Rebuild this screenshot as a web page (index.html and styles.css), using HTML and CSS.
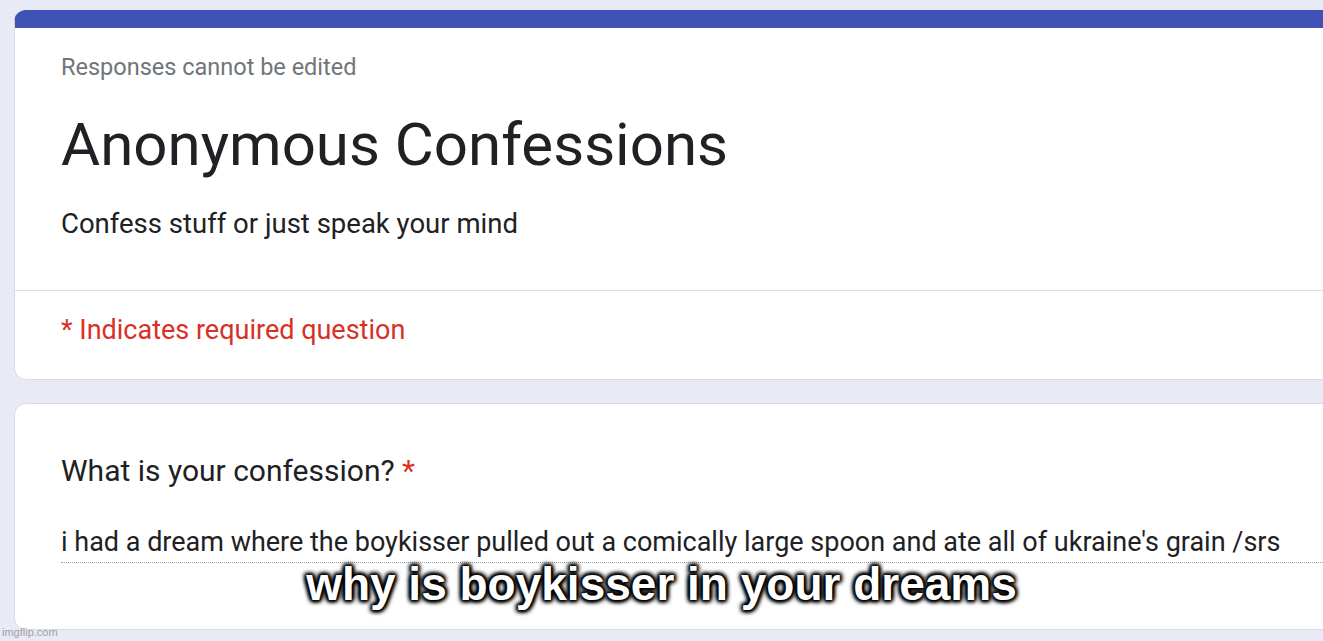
FILE: index.html
```html
<!DOCTYPE html>
<html lang="en">
<head>
    <meta charset="UTF-8">
    <title>Anonymous Confessions</title>
    <link rel="stylesheet" href="styles.css">
</head>
<body>
    <div class="page">
        <div class="card header-card">
            <div class="header-main">
                <p class="note">Responses cannot be edited</p>
                <h1 class="title">Anonymous Confessions</h1>
                <p class="desc">Confess stuff or just speak your mind</p>
            </div>
            <div class="header-foot">
                <p class="required">* Indicates required question</p>
            </div>
        </div>

        <div class="card question-card">
            <p class="question">What is your confession? <span class="star">*</span></p>
            <div class="answer">i had a dream where the boykisser pulled out a comically large spoon and ate all of ukraine's grain /srs</div>
        </div>
    </div>

    <!-- meme caption on top -->
    <div class="caption">why is boykisser in your dreams</div>
    <div class="watermark">imgflip.com</div>
</body>
</html>
```

FILE: styles.css
```css
html, body {
    margin: 0;
    height: 100%;
    overflow: hidden;
}
body {
    background-color: #e8eaf6;
    font-family: Roboto, "Noto Sans", sans-serif;
    color: #202124;
    position: relative;
}
.page {
    padding: 10px 0 0 14px;
    width: 1360px;
}
.card {
    background-color: #fff;
    border: 1px solid #dadce0;
    border-radius: 12px;
}
.header-card {
    border-top: 18px solid #3f51b5;
    height: 351px;
}
.header-main {
    padding: 25px 46px 0;
    height: 237px;
    border-bottom: 1px solid #dadce0;
}
.note {
    margin: 0;
    font-size: 23.5px;
    color: #70757a;
}
.title {
    margin: 28px 0 0;
    font-size: 60px;
    font-weight: 400;
    line-height: 72px;
}
.desc {
    margin: 26px 0 0;
    font-size: 27.5px;
}
.header-foot {
    padding: 23px 46px;
}
.required {
    margin: 0;
    font-size: 27px;
    color: #d93025;
}
.question-card {
    margin-top: 23px;
    height: 225px;
    padding: 0 0 0 46px;
}
.question {
    margin: 49px 0 0;
    font-size: 30px;
}
.star {
    color: #d93025;
}
.answer {
    margin-top: 38px;
    font-size: 27px;
    padding-bottom: 4px;
    border-bottom: 1px dotted #9aa0a6;
    white-space: nowrap;
}
.caption {
    position: absolute;
    left: 0;
    right: 0;
    top: 557px;
    text-align: center;
    font-family: "Liberation Sans", Arial, sans-serif;
    font-size: 46px;
    font-weight: bold;
    color: #fff;
    text-shadow: 0 0 2px #000, 0 0 3px #000, 0 0 4px #000, 2px 2px 4px #000, -2px -2px 4px #000, 2px -2px 4px #000, -2px 2px 4px #000;
}
.watermark {
    position: absolute;
    left: 2px;
    bottom: 3px;
    font-family: "Liberation Sans", Arial, sans-serif;
    font-size: 11px;
    color: #a0a0a0;
}
```
